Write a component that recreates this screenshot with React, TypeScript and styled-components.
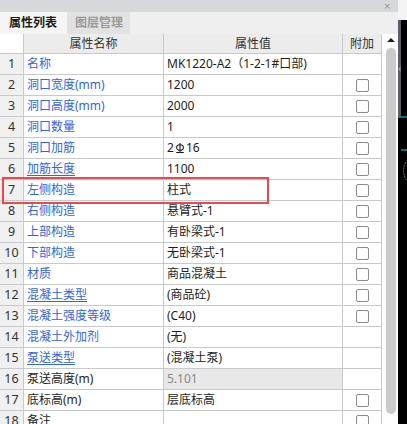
import React from 'react';
import styled, { createGlobalStyle } from 'styled-components';

const GlobalStyle = createGlobalStyle`
  html, body {
    margin: 0;
    padding: 0;
    background: #ffffff;
  }
  #root {
    width: 407px;
    height: 424px;
    overflow: hidden;
  }
`;

const Screen = styled.div`
  display: flex;
  width: 407px;
  height: 424px;
  font-family: "Noto Sans", "Noto Sans CJK SC", sans-serif;
  font-size: 12px;
  color: #222;
`;

const Panel = styled.div`
  width: 398px;
  display: flex;
  flex-direction: column;
  background: #ffffff;
`;

const TitleBar = styled.div`
  height: 12px;
  background: #d6d8dc;
  display: flex;
  justify-content: flex-end;
  align-items: center;
  padding-right: 7px;
`;

const CloseMark = styled.span`
  font-family: "DejaVu Sans", sans-serif;
  font-size: 9px;
  line-height: 12px;
  color: #8f9399;
`;

const TabBar = styled.div`
  height: 22px;
  background: #efefef;
  display: flex;
`;

const Tab = styled.div<{ active?: boolean }>`
  width: ${p => (p.active ? '67px' : '63px')};
  box-sizing: border-box;
  padding-left: ${p => (p.active ? '9px' : '8px')};
  display: flex;
  align-items: center;
  font-size: 12px;
  line-height: 22px;
  background: ${p => (p.active ? '#f5f5f5' : '#e2e2e2')};
  color: ${p => (p.active ? '#1c1c1c' : '#9a9a9a')};
  font-weight: ${p => (p.active ? 700 : 600)};
`;

const Body = styled.div`
  flex: 1;
  display: flex;
  min-height: 0;
`;

const TableWrap = styled.div`
  position: relative;
  width: 382px;
  overflow: hidden;
`;

const Row = styled.div<{ header?: boolean }>`
  display: grid;
  grid-template-columns: 24px 140px 179px 39px;
  height: ${p => (p.header ? '20px' : '21px')};
`;

const Cell = styled.div<{ bg?: string; align?: 'center' | 'left' }>`
  box-sizing: border-box;
  border-right: 1px solid #c9c9cd;
  border-bottom: 1px solid #c9c9cd;
  background: ${p => p.bg || '#ffffff'};
  display: flex;
  align-items: center;
  justify-content: ${p => (p.align === 'center' ? 'center' : 'flex-start')};
  padding-left: ${p => (p.align === 'center' ? '0' : '3px')};
  white-space: nowrap;
  overflow: hidden;
  line-height: 20px;
`;

const HeadText = styled.span`
  color: #333;
  font-size: 12px;
`;

const NumText = styled.span`
  color: #333;
  font-size: 12.5px;
`;

const NameText = styled.span<{ link?: boolean; plain?: boolean }>`
  color: ${p => (p.plain ? '#1e1e1e' : '#3164e8')};
  text-decoration: ${p => (p.link ? 'underline' : 'none')};
  text-underline-offset: 2px;
`;

const ValueText = styled.span<{ muted?: boolean }>`
  color: ${p => (p.muted ? '#8a8a8a' : '#1e1e1e')};
  display: inline-flex;
  align-items: center;
`;

const Check = styled.div`
  width: 13px;
  height: 13px;
  box-sizing: border-box;
  border: 1px solid #8c8c8c;
  border-radius: 2px;
  background: #fff;
`;

const Highlight = styled.div`
  position: absolute;
  left: 2px;
  top: 143px;
  width: 267px;
  height: 27px;
  box-sizing: border-box;
  border: 2.5px solid #f0484a;
  pointer-events: none;
`;

const ScrollTrack = styled.div`
  width: 16px;
  background: #ffffff;
  display: flex;
  flex-direction: column;
  align-items: center;
  padding-left: 2px;
  box-sizing: border-box;
`;

const ScrollArrow = styled.div`
  margin-top: 4px;
  width: 0;
  height: 0;
  border-left: 4px solid transparent;
  border-right: 4px solid transparent;
  border-bottom: 4px solid #222;
`;

const ScrollThumb = styled.div`
  margin-top: 6px;
  width: 10px;
  height: 366px;
  border-radius: 5px;
  background: #cbcbcb;
`;

const SideStrip = styled.div`
  width: 9px;
  background: #000;
`;

const Rebar = () => (
  <svg width="10" height="12" viewBox="0 0 10 12" style={{ margin: '0 1px' }}>
    <ellipse cx="5" cy="5.5" rx="3.4" ry="2.8" fill="none" stroke="#1e1e1e" strokeWidth="1.1" />
    <line x1="5" y1="1" x2="5" y2="10.5" stroke="#1e1e1e" strokeWidth="1.1" />
    <line x1="1.2" y1="10.5" x2="8.8" y2="10.5" stroke="#1e1e1e" strokeWidth="1.1" />
  </svg>
);

type Item = {
  name: string;
  value: React.ReactNode;
  link?: boolean;
  plain?: boolean;
  check?: boolean;
  locked?: boolean;
};

const items: Item[] = [
  { name: '名称', value: 'MK1220-A2（1-2-1#口部)' },
  { name: '洞口宽度(mm)', value: '1200', check: true },
  { name: '洞口高度(mm)', value: '2000', check: true },
  { name: '洞口数量', value: '1', check: true },
  { name: '洞口加筋', value: <>2<Rebar />16</>, check: true },
  { name: '加筋长度', value: '1100', check: true, link: true },
  { name: '左侧构造', value: '柱式', check: true },
  { name: '右侧构造', value: '悬臂式-1', check: true },
  { name: '上部构造', value: '有卧梁式-1', check: true },
  { name: '下部构造', value: '无卧梁式-1', check: true },
  { name: '材质', value: '商品混凝土', check: true },
  { name: '混凝土类型', value: '(商品砼)', check: true, link: true },
  { name: '混凝土强度等级', value: '(C40)', check: true },
  { name: '混凝土外加剂', value: '(无)' },
  { name: '泵送类型', value: '(混凝土泵)', link: true },
  { name: '泵送高度(m)', value: '5.101', plain: true, locked: true },
  { name: '底标高(m)', value: '层底标高', plain: true, check: true },
  { name: '备注', value: '', plain: true, check: true },
];

const Strip = () => (
  <svg width="9" height="424" viewBox="0 0 9 424">
    <rect x="0" y="0" width="9" height="20" fill="#f4f4f4" />
    <rect x="0" y="20" width="3" height="98" fill="#5b6068" />
    <rect x="3" y="20" width="6" height="98" fill="#000" />
    <path d="M2.5 66 L0.5 69 L2.5 72 Z" fill="#9aa0a8" />
    <line x1="3" y1="117" x2="9" y2="117" stroke="#19d6e8" strokeWidth="1" />
    <line x1="3" y1="150" x2="9" y2="150" stroke="#19d6e8" strokeWidth="1" />
    <path d="M8 162 Q3 170 8 180" fill="none" stroke="#2bb34a" strokeWidth="1" strokeDasharray="2 1" />
  </svg>
);

export default function App() {
  return (
    <>
      <GlobalStyle />
      <Screen>
        <Panel>
          <TitleBar>
            <CloseMark>×</CloseMark>
          </TitleBar>
          <TabBar>
            <Tab active>属性列表</Tab>
            <Tab>图层管理</Tab>
          </TabBar>
          <Body>
            <TableWrap>
              <Row header>
                <Cell />
                <Cell bg="#ececec" align="center">
                  <HeadText>属性名称</HeadText>
                </Cell>
                <Cell bg="#ececec" align="center">
                  <HeadText>属性值</HeadText>
                </Cell>
                <Cell bg="#ececec" align="center">
                  <HeadText>附加</HeadText>
                </Cell>
              </Row>
              {items.map((it, i) => (
                <Row key={i}>
                  <Cell bg="#f0f0f0" align="center">
                    <NumText>{i + 1}</NumText>
                  </Cell>
                  <Cell>
                    <NameText link={it.link} plain={it.plain}>
                      {it.name}
                    </NameText>
                  </Cell>
                  <Cell bg={it.locked ? '#e8e8e8' : undefined}>
                    <ValueText muted={it.locked}>{it.value}</ValueText>
                  </Cell>
                  <Cell align="center">{it.check && <Check />}</Cell>
                </Row>
              ))}
              <Highlight />
            </TableWrap>
            <ScrollTrack>
              <ScrollArrow />
              <ScrollThumb />
            </ScrollTrack>
          </Body>
        </Panel>
        <SideStrip>
          <Strip />
        </SideStrip>
      </Screen>
    </>
  );
}
